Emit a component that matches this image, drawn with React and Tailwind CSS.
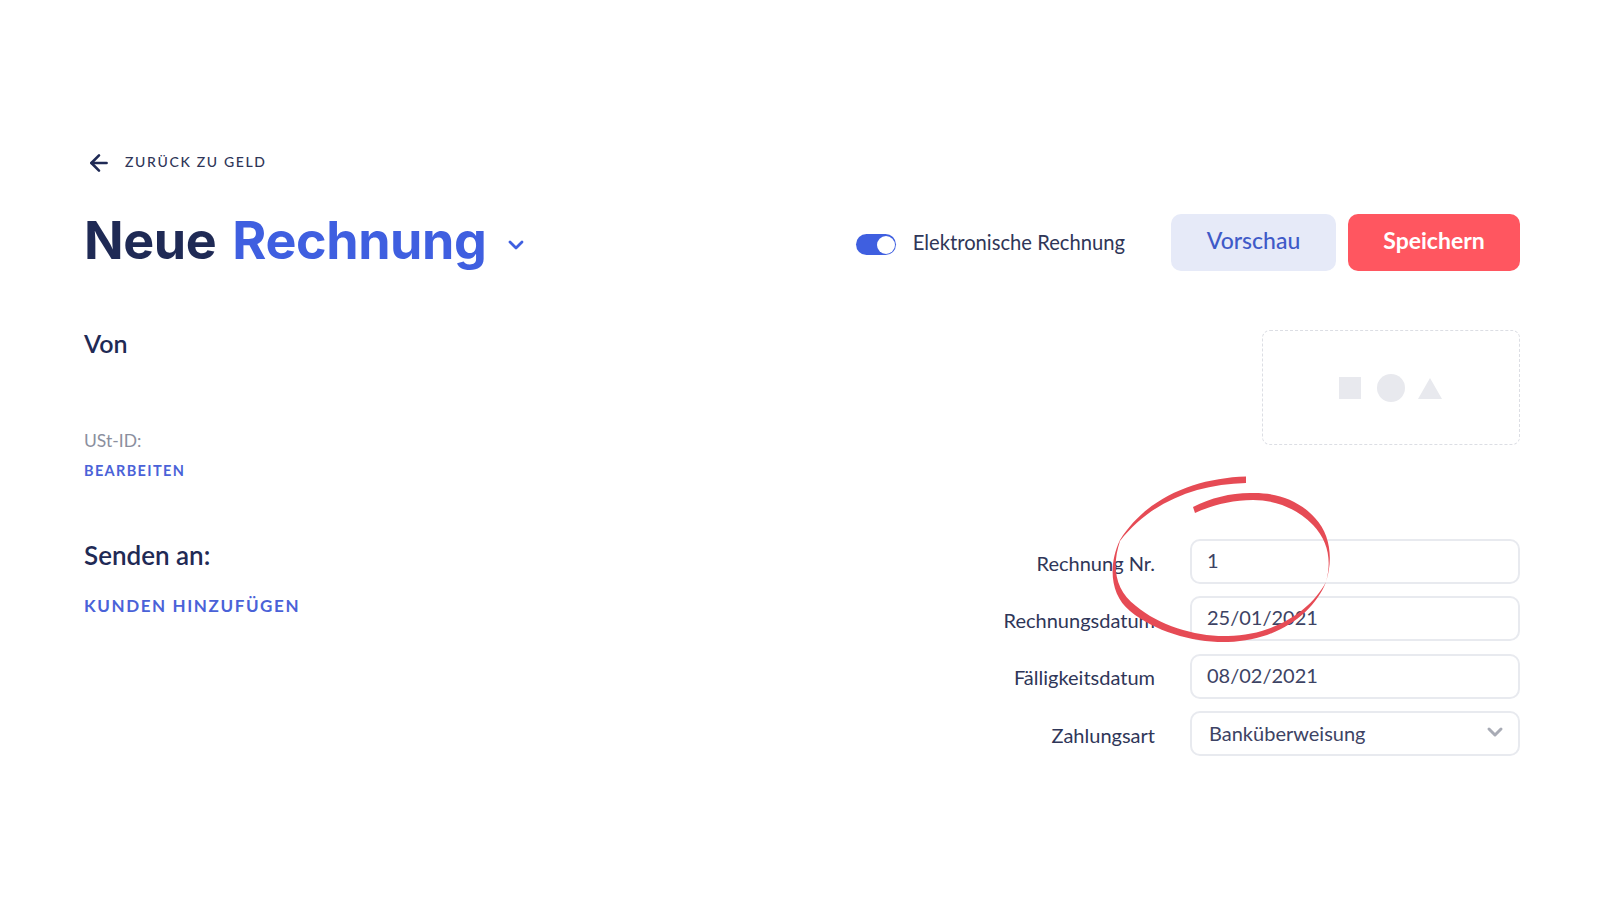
import { ChevronDown, ArrowLeft } from 'lucide-react';

const FIELDS = [
  { label: 'Rechnung Nr.', value: '1' },
  { label: 'Rechnungsdatum', value: '25/01/2021' },
  { label: 'Fälligkeitsdatum', value: '08/02/2021' },
];

const Field = ({ label, children }) => (
  <div className="flex items-center">
    <span className="w-[180px] pt-[2px] text-right text-[20px] leading-6 text-[#2f3658]">{label}</span>
    <div className="ml-[35px] flex h-[45px] w-[330px] items-center justify-between rounded-[10px] border-2 border-[#e8eaef] px-[15px] pb-[3px] text-[20px] text-[#3d4364]">
      {children}
    </div>
  </div>
);

const App = () => {
  return (
    <div className="relative h-[900px] w-[1600px] overflow-hidden bg-white pt-[149px] pr-[80px] pl-[84px] font-['Lato',sans-serif] text-[#1f2a55]">
      <a className="flex h-6 items-center text-[14px] font-medium tracking-[1.65px] text-[#2f3658]">
        <ArrowLeft className="mt-[3px] mr-[13px] ml-[2px] h-[26px] w-[26px] text-[#1f2a55]" strokeWidth={2.4} />
        ZURÜCK ZU GELD
      </a>

      <div className="mt-[39px] flex h-[60px] items-center justify-between">
        <div className="-mt-[2px] flex items-center">
          <h1 className="font-['Inter',sans-serif] text-[52px] leading-[60px] font-bold tracking-[-0.4px] [word-spacing:4px]">
            Neue <span className="text-[#3f5fe0]">Rechnung</span>
          </h1>
          <ChevronDown className="mt-2 ml-[17px] h-[24px] w-[24px] text-[#3f5fe0]" strokeWidth={2.8} />
        </div>
        <div className="flex items-center">
          <div className="mt-[5px] flex h-[21px] w-[40px] items-center justify-end rounded-full bg-[#3f5fe0] pr-[1px]">
            <span className="h-[18px] w-[18px] rounded-full bg-white" />
          </div>
          <span className="mt-[1px] mr-[46px] ml-[17px] text-[20.2px] text-[#2f3658]">Elektronische Rechnung</span>
          <button className="h-[57px] w-[165px] rounded-[10px] bg-[#e6eaf8] pb-[3px] text-[23px] font-medium text-[#3f5ac8]">Vorschau</button>
          <button className="ml-3 h-[57px] w-[172px] rounded-[10px] bg-[#ff5660] pb-[3px] text-[23px] font-bold text-white">Speichern</button>
        </div>
      </div>

      <div className="mt-[56px] flex items-start justify-between">
        <div>
          <h2 className="text-[25px] leading-[30px] font-semibold">Von</h2>
          <p className="mt-[71px] text-[17.5px] leading-6 text-[#8b8f9e]">USt-ID:</p>
          <a className="mt-2 block text-[14.5px] leading-5 font-bold tracking-[1.35px] text-[#4a62d8]">BEARBEITEN</a>
          <h2 className="mt-[58px] text-[26px] leading-[32px] font-semibold">Senden an:</h2>
          <a className="mt-[25px] block text-[17px] leading-5 font-bold tracking-[1.6px] text-[#4a62d8]">KUNDEN HINZUFÜGEN</a>
        </div>

        <div className="mt-[2px] flex flex-col items-end">
          <div className="flex h-[115px] w-[258px] items-center justify-center rounded-[8px] border border-dashed border-[#dcdee4]">
            <span className="-ml-[2px] h-[22px] w-[22px] bg-[#e8e9ee]" />
            <span className="ml-[16px] h-[28px] w-[28px] rounded-full bg-[#e8e9ee]" />
            <svg className="ml-[13px]" width="24" height="22" viewBox="0 0 24 22"><path d="M12 1 24 22H0Z" fill="#e8e9ee" /></svg>
          </div>
          <div className="mt-[94px] flex flex-col gap-[12.4px]">
            {FIELDS.map((f) => (
              <Field key={f.label} label={f.label}>{f.value}</Field>
            ))}
            <Field label="Zahlungsart">
              <span className="pt-[2px] pl-[2px]">Banküberweisung</span>
              <ChevronDown className="-mr-[4px] h-[24px] w-[24px] text-[#a8abb5]" strokeWidth={3} />
            </Field>
          </div>
        </div>
      </div>

      {/* hand drawn ring over the form */}
      <svg className="pointer-events-none absolute top-0 left-0" width="1600" height="900" viewBox="0 0 1600 900">
        <path
          fill="#e64b55"
          d="M1246 476.5C1195 478 1146 498 1120 540C1108 565 1110 595 1130 611C1155 632 1195 643 1228 642C1277 641 1314 613 1326 582C1333 560 1331 535 1315 518C1299 500 1276 492 1250 493C1230 493 1211 498 1193 507L1195 513C1213 505 1232 500 1253 500C1276 500 1298 509 1313 525C1328 541 1332 560 1326 582C1310 612 1273 635 1228 636C1197 637 1160 626 1136 606C1114 590 1112 565 1120 541C1150 502 1197 484 1246 483Z"
        />
      </svg>
    </div>
  );
};

export default App;
